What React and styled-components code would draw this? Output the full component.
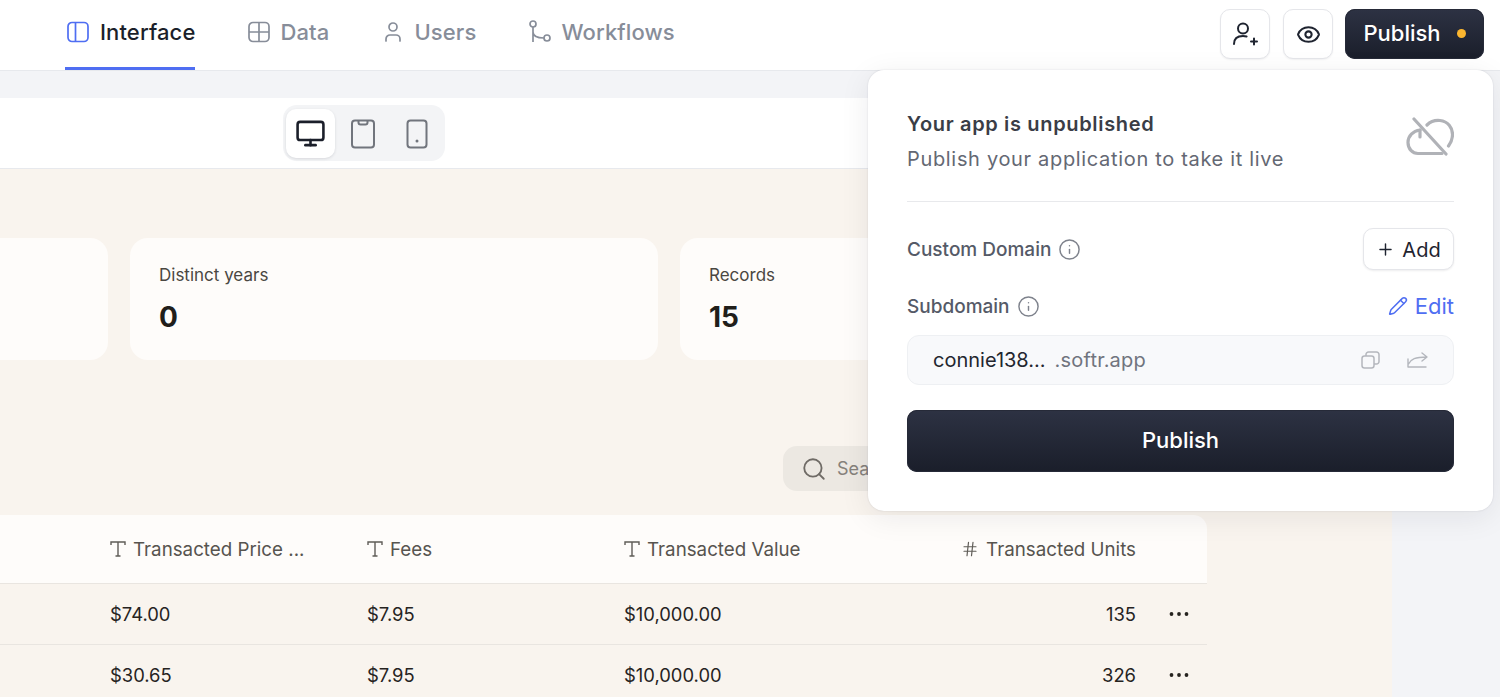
import React from 'react';
import styled, { createGlobalStyle } from 'styled-components';
import { Eye, Info, Monitor, Plus, Pencil, Search, Hash, User } from 'lucide-react';

const Global = createGlobalStyle`
  html, body { margin: 0; padding: 0; background: #f3f4f7; }
  * { box-sizing: border-box; }
  body { font-family: Inter, "Liberation Sans", sans-serif; color: #1b1f2a; }
`;

const Page = styled.div`
  position: relative;
  width: 1500px;
  height: 697px;
  overflow: hidden;
`;

const TopBar = styled.header`
  height: 71px;
  background: #fff;
  border-bottom: 1px solid #e7e9ed;
  display: flex;
  justify-content: space-between;
  padding: 0 16px 0 65px;
`;

const Tabs = styled.nav`
  display: flex;
  gap: 52px;
`;

const Tab = styled.a`
  height: 70px;
  display: flex;
  align-items: center;
  gap: ${(props) => (props.$active ? '10px' : '9px')};
  font-size: 22px;
  font-weight: 500;
  letter-spacing: 0.12px;
  color: ${(props) => (props.$active ? '#1b1f2a' : '#878d99')};
  border-bottom: 3px solid ${(props) => (props.$active ? '#4f6ef2' : 'transparent')};
  padding-bottom: 3px;
  padding-left: ${(props) => (props.$active ? '1px' : '0')};
  svg { flex: none; color: ${(props) => (props.$active ? '#4f6ef2' : '#878d99')}; }
`;

const Actions = styled.div`
  display: flex;
  gap: 13px;
  padding-top: 9px;
`;

const IconButton = styled.button`
  width: 50px;
  height: 50px;
  padding: 0;
  display: flex;
  align-items: center;
  justify-content: center;
  background: #fff;
  border: 1.5px solid #e5e6ea;
  border-radius: 10px;
  color: #1f2430;
  box-shadow: 0 1px 2px rgba(20, 25, 40, 0.06);
`;

const DarkButton = styled.button`
  font-family: inherit;
  color: #fff;
  font-weight: 500;
  border: 0;
  border-radius: 10px;
  background: linear-gradient(180deg, #2d3243 0%, #1a1e2a 100%);
  box-shadow: inset 0 0 0 1px #262a38;
  display: flex;
  align-items: center;
  justify-content: center;
  padding: 0 0 2px;
`;

const HeaderPublish = styled(DarkButton)`
  width: 139px;
  height: 50px;
  font-size: 22px;
  gap: 16px;
  margin-left: -1px;
`;

const Dot = styled.span`
  width: 9px;
  height: 9px;
  border-radius: 50%;
  background: #fbb62f;
`;

const Workspace = styled.main`
  width: 1392px;
  padding-top: 27px;
`;

const Toolbar = styled.div`
  height: 71px;
  background: #fff;
  border-bottom: 1px solid #e7e9ed;
  padding: 7px 0 0 283px;
`;

const Segments = styled.div`
  width: 162px;
  height: 56px;
  padding: 4px 3px;
  display: flex;
  gap: 4px;
  background: #f3f4f6;
  border-radius: 14px;
`;

const Segment = styled.div`
  width: 49px;
  height: 49px;
  display: flex;
  align-items: center;
  justify-content: center;
  border-radius: 10px;
  color: ${(props) => (props.$active ? '#1b1f2a' : '#71757d')};
  background: ${(props) => (props.$active ? '#fff' : 'transparent')};
  box-shadow: ${(props) => (props.$active ? '0 1px 3px rgba(20,25,40,.12)' : 'none')};
`;

const Canvas = styled.section`
  height: 530px;
  background: #f9f4ee;
  padding-top: 69px;
`;

const Cards = styled.div`
  display: grid;
  grid-template-columns: repeat(3, 528px);
  gap: 22px;
  margin-left: -420px;
`;

const Card = styled.div`
  height: 122px;
  padding: 27px 29px;
  background: #fefcfa;
  border-radius: 18px;
`;

const CardLabel = styled.div`
  font-size: 17px;
  line-height: 20px;
  color: #4a4742;
`;

const CardValue = styled.div`
  margin-top: 15px;
  font-size: 28px;
  line-height: 34px;
  font-weight: 700;
  color: #211e1a;
`;

const SearchBox = styled.div`
  width: 300px;
  height: 45px;
  margin: 86px 0 24px 783px;
  padding-left: 18px;
  display: flex;
  align-items: center;
  gap: 10px;
  background: #ece8e2;
  border-radius: 14px;
  font-size: 18px;
  color: #85817b;
  svg { color: #6f6b66; }
`;

const Table = styled.div`
  width: 1207px;
`;

const Row = styled.div`
  display: grid;
  grid-template-columns: 257px 257px 1fr 180px 71px;
  align-items: center;
  padding-left: 110px;
  font-size: 18.4px;
  color: #26231f;
  height: ${(props) => (props.$head ? '69px' : '61px')};
  background: ${(props) => (props.$head ? '#fefcfa' : 'transparent')};
  border-bottom: 1px solid #e9e5e0;
  border-top-right-radius: ${(props) => (props.$head ? '14px' : '0')};
`;

const HeadCell = styled.div`
  display: flex;
  align-items: center;
  justify-content: ${(props) => (props.$right ? 'flex-end' : 'flex-start')};
  gap: 7px;
  font-size: 18.75px;
  color: #57544f;
  white-space: nowrap;
  svg { flex: none; color: #5f5c57; }
`;

const Number = styled.div`
  text-align: right;
`;

const More = styled.div`
  display: flex;
  justify-content: flex-end;
  padding-right: 18px;
  color: #26231f;
`;

const Popover = styled.aside`
  position: absolute;
  left: 868px;
  top: 70px;
  width: 625px;
  height: 441px;
  padding: 41px 39px 0;
  background: #fff;
  border-radius: 16px;
  box-shadow: 0 0 2px rgba(20, 25, 40, 0.12), 0 6px 30px rgba(20, 25, 40, 0.08);
`;

const PopHead = styled.div`
  display: flex;
  justify-content: space-between;
  align-items: flex-start;
  height: 91px;
  padding-bottom: 28px;
  border-bottom: 1px solid #e8e9ec;
  svg { color: #b0b2b7; margin-top: 6px; }
`;

const PopTitle = styled.div`
  font-size: 20px;
  line-height: 26px;
  font-weight: 600;
  letter-spacing: 0.66px;
  color: #3a3d46;
`;

const PopSub = styled.div`
  margin-top: 9px;
  font-size: 20px;
  line-height: 26px;
  letter-spacing: 0.67px;
  color: #646873;
`;

const FieldRow = styled.div`
  display: flex;
  justify-content: space-between;
  align-items: center;
  height: ${(props) => props.$height};
  margin-top: ${(props) => props.$top};
`;

const FieldLabel = styled.div`
  display: flex;
  align-items: center;
  gap: 7px;
  font-size: 19px;
  font-weight: 500;
  color: #555a67;
  svg { color: #7e828c; }
`;

const AddButton = styled.button`
  width: 91px;
  height: 42px;
  padding: 1px 0 0;
  display: flex;
  align-items: center;
  justify-content: center;
  gap: 7px;
  font-family: inherit;
  font-size: 20px;
  color: #1f2430;
  background: #fff;
  border: 1.5px solid #e5e6ea;
  border-radius: 10px;
  box-shadow: 0 1px 2px rgba(20, 25, 40, 0.08);
`;

const EditLink = styled.a`
  display: flex;
  align-items: center;
  gap: 7px;
  font-size: 22px;
  color: #4f6ef2;
`;

const Domain = styled.div`
  height: 50px;
  margin-top: 11px;
  padding: 0 25px;
  display: flex;
  align-items: center;
  background: #f8f9fb;
  border: 1px solid #eef0f3;
  border-radius: 12px;
  font-size: 20px;
`;

const DomainName = styled.span`
  color: #23262f;
`;

const DomainSuffix = styled.span`
  margin-left: 9px;
  letter-spacing: 0.2px;
  color: #70747e;
`;

const DomainTools = styled.div`
  margin-left: auto;
  display: flex;
  align-items: center;
  gap: 27px;
  color: #b4b7bd;
`;

const PopPublish = styled(DarkButton)`
  width: 100%;
  height: 62px;
  margin-top: 25px;
  font-size: 22px;
`;

const PanelIcon = () => (
  <svg width="24" height="24" viewBox="0 0 24 24" fill="none" stroke="currentColor" strokeWidth="1.7">
    <rect x="2" y="2.5" width="20" height="19" rx="4" />
    <path d="M9.5 2.5v19" />
  </svg>
);

const GridIcon = () => (
  <svg width="24" height="24" viewBox="0 0 24 24" fill="none" stroke="currentColor" strokeWidth="1.7">
    <rect x="2" y="2.5" width="20" height="19" rx="4" />
    <path d="M2 12h20M12 2.500v19" />
  </svg>
);

const WorkflowIcon = () => (
  <svg width="24" height="26" viewBox="0 0 24 26" fill="none" stroke="currentColor" strokeWidth="1.7">
    <circle cx="5" cy="5" r="3" />
    <circle cx="19" cy="19" r="3" />
    <path d="M5 8v15M5 13c0 4 4 6 11 6" />
  </svg>
);

const InviteIcon = () => (
  <svg width="26" height="26" viewBox="0 0 26 26" fill="none" stroke="currentColor" strokeWidth="2" strokeLinecap="round">
    <circle cx="11" cy="7.5" r="5" />
    <path d="M2 23c0-5 3-8 9-8 1.400 0 2.600.2 3.600.5M19 20.500h6M22 17.500v6" />
  </svg>
);

const TabletIcon = () => (
  <svg width="26" height="30" viewBox="1 0 26 30" fill="none" stroke="currentColor" strokeWidth="2">
    <rect x="2" y="1.500" width="22" height="27" rx="3" />
    <path d="M8.500 1.500v2a2 2 0 0 0 2 2h5a2 2 0 0 0 2-2v-2" />
  </svg>
);

const PhoneIcon = () => (
  <svg width="22" height="30" viewBox="0 0 22 30" fill="none" stroke="currentColor" strokeWidth="2">
    <rect x="1.500" y="1.500" width="19" height="27" rx="3" />
    <circle cx="11" cy="22" r="1.500" fill="currentColor" stroke="none" />
  </svg>
);

const CloudOffIcon = () => (
  <svg width="48" height="40" viewBox="0 0 48 40" fill="none" stroke="currentColor" strokeWidth="3.200" strokeLinecap="round">
    <path d="M21 8c3-3 8-5 13-4.500 8 .8 12.500 7 12.500 14 0 4-1.500 8-4 11.500" />
    <path d="M14 13C7 14 2 19 2 25.500 2 32 6.500 36.500 12 36.500h24" />
    <path d="M14 13v7" />
    <path d="M8 2l32 35" />
  </svg>
);

const CopyIcon = () => (
  <svg width="19" height="18" viewBox="0 0 19 18" fill="none" stroke="currentColor" strokeWidth="1.500">
    <rect x="1" y="5" width="12" height="12" rx="2.500" />
    <path d="M5 5V3.500A2.500 2.500 0 0 1 7.500 1h8A2.500 2.500 0 0 1 18 3.500v7a2.500 2.500 0 0 1-2.500 2.500H13" />
  </svg>
);

const ShareIcon = () => (
  <svg width="21" height="16" viewBox="0 0 21 16" fill="none" stroke="currentColor" strokeWidth="1.400" strokeLinecap="round" strokeLinejoin="round">
    <path d="M1 7v8h18M1.500 12C4 7 8 5 20 5M15 1l5 4-5 4" />
  </svg>
);

const TextIcon = () => (
  <svg width="16" height="18" viewBox="0 0 16 18" fill="none" stroke="currentColor" strokeWidth="1.400">
    <path d="M1 5V2h14v3M8 2v14M5.500 16h5" />
  </svg>
);

const Dots = () => (
  <svg width="20" height="6" viewBox="0 0 20 6" fill="currentColor">
    <circle cx="2.500" cy="3" r="1.900" />
    <circle cx="10" cy="3" r="1.900" />
    <circle cx="17.500" cy="3" r="1.900" />
  </svg>
);

const rows = [
  ['$74.00', '$7.95', '$10,000.00', '135'],
  ['$30.65', '$7.95', '$10,000.00', '326'],
];

export default function App() {
  return (
    <Page>
      <Global />
      <TopBar>
        <Tabs>
          <Tab $active><PanelIcon />Interface</Tab>
          <Tab><GridIcon />Data</Tab>
          <Tab><User size={24} strokeWidth={1.7} />Users</Tab>
          <Tab><WorkflowIcon />Workflows</Tab>
        </Tabs>
        <Actions>
          <IconButton><InviteIcon /></IconButton>
          <IconButton><Eye size={25} strokeWidth={2} /></IconButton>
          <HeaderPublish>Publish<Dot /></HeaderPublish>
        </Actions>
      </TopBar>

      <Workspace>
        <Toolbar>
          <Segments>
            <Segment $active><Monitor size={31} strokeWidth={2} /></Segment>
            <Segment><TabletIcon /></Segment>
            <Segment><PhoneIcon /></Segment>
          </Segments>
        </Toolbar>
        <Canvas>
          <Cards>
            <Card />
            <Card>
              <CardLabel>Distinct years</CardLabel>
              <CardValue>0</CardValue>
            </Card>
            <Card>
              <CardLabel>Records</CardLabel>
              <CardValue>15</CardValue>
            </Card>
          </Cards>
          <SearchBox><Search size={26} strokeWidth={1.7} />Search</SearchBox>
          <Table>
            <Row $head>
              <HeadCell><TextIcon />Transacted Price ...</HeadCell>
              <HeadCell><TextIcon />Fees</HeadCell>
              <HeadCell><TextIcon />Transacted Value</HeadCell>
              <HeadCell $right><Hash size={18} strokeWidth={1.6} />Transacted Units</HeadCell>
              <div />
            </Row>
            {rows.map((row) => (
              <Row key={row[0]}>
                <div>{row[0]}</div>
                <div>{row[1]}</div>
                <div>{row[2]}</div>
                <Number>{row[3]}</Number>
                <More><Dots /></More>
              </Row>
            ))}
          </Table>
        </Canvas>
      </Workspace>

      <Popover>
        <PopHead>
          <div>
            <PopTitle>Your app is unpublished</PopTitle>
            <PopSub>Publish your application to take it live</PopSub>
          </div>
          <CloudOffIcon />
        </PopHead>
        <FieldRow $height="42px" $top="26px">
          <FieldLabel>Custom Domain<Info size={23} strokeWidth={1.5} /></FieldLabel>
          <AddButton><Plus size={19} strokeWidth={1.8} />Add</AddButton>
        </FieldRow>
        <FieldRow $height="36px" $top="18px">
          <FieldLabel>Subdomain<Info size={23} strokeWidth={1.5} /></FieldLabel>
          <EditLink><Pencil size={20} strokeWidth={1.8} />Edit</EditLink>
        </FieldRow>
        <Domain>
          <DomainName>connie138...</DomainName>
          <DomainSuffix>.softr.app</DomainSuffix>
          <DomainTools>
            <CopyIcon />
            <ShareIcon />
          </DomainTools>
        </Domain>
        <PopPublish>Publish</PopPublish>
      </Popover>
    </Page>
  );
}
